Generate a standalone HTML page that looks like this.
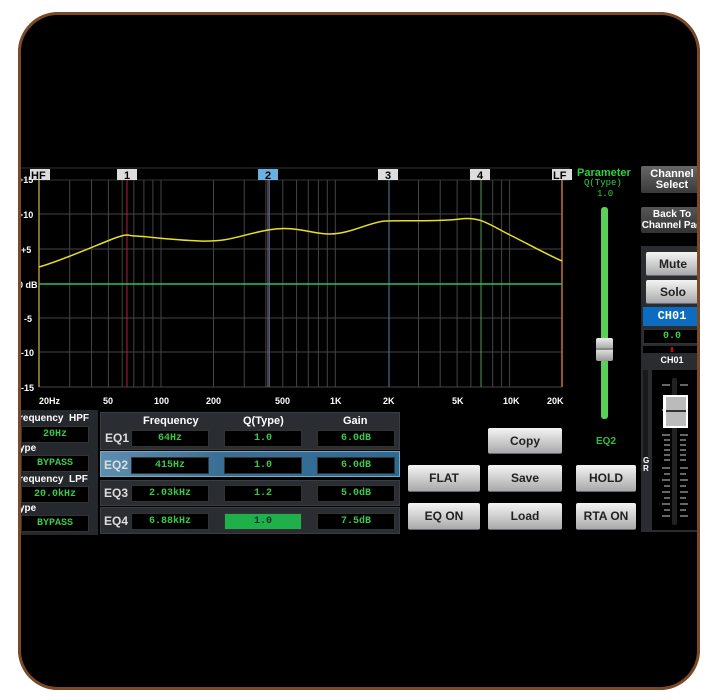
<!DOCTYPE html>
<html><head><meta charset="utf-8"><style>
*{margin:0;padding:0;box-sizing:border-box}
body{width:718px;height:700px;background:#fff;position:relative;overflow:hidden;font-family:"Liberation Sans",sans-serif}
#frame{position:absolute;left:18px;top:12px;width:682px;height:678px;background:#000;border-radius:40px}
#border{position:absolute;left:18px;top:12px;width:682px;height:678px;border:3px solid #7a4a28;border-radius:40px;z-index:10;box-shadow:0 0 0 40px #fff}
.a{position:absolute}
.btn{position:absolute;background:linear-gradient(#f4f4f4,#c8c8c8 60%,#a8a8a8);border-radius:2px;color:#222;font-weight:bold;font-size:12px;text-align:center;border-bottom:1px solid #667}
.box{position:absolute;background:#000;border:1px solid #333;color:#3ec64a;font-family:"Liberation Mono",monospace;font-size:10px;font-weight:bold;text-align:center;line-height:15px}
.lbl{position:absolute;color:#fff;font-size:10px;font-weight:bold}
.row{position:absolute;left:100px;width:300px;background:#2a2d31;border:1px solid #3a3d42}
.eq{position:absolute;color:#ddd;font-size:12px;font-weight:bold}
</style></head><body>
<div id="frame"></div>
<div id="border"></div>
<svg class="a" style="left:0;top:0" width="718" height="700">
<rect x="18" y="168" width="551" height="12" fill="#000" stroke="#333"/>
<g stroke="#444" stroke-width="1">
<line x1="69.7" y1="180" x2="69.7" y2="387"/><line x1="91.5" y1="180" x2="91.5" y2="387"/><line x1="108.4" y1="180" x2="108.4" y2="387"/><line x1="122.2" y1="180" x2="122.2" y2="387"/><line x1="133.8" y1="180" x2="133.8" y2="387"/><line x1="143.9" y1="180" x2="143.9" y2="387"/><line x1="152.9" y1="180" x2="152.9" y2="387"/><line x1="161" y1="180" x2="161" y2="387"/>
<line x1="213.5" y1="180" x2="213.5" y2="387"/><line x1="244.2" y1="180" x2="244.2" y2="387"/><line x1="265.9" y1="180" x2="265.9" y2="387"/><line x1="282.8" y1="180" x2="282.8" y2="387"/><line x1="296.6" y1="180" x2="296.6" y2="387"/><line x1="308.3" y1="180" x2="308.3" y2="387"/><line x1="318.4" y1="180" x2="318.4" y2="387"/><line x1="327.3" y1="180" x2="327.3" y2="387"/><line x1="335.3" y1="180" x2="335.3" y2="387"/>
<line x1="418.5" y1="180" x2="418.5" y2="387"/><line x1="440.2" y1="180" x2="440.2" y2="387"/><line x1="457.1" y1="180" x2="457.1" y2="387"/><line x1="470.9" y1="180" x2="470.9" y2="387"/><line x1="492.7" y1="180" x2="492.7" y2="387"/><line x1="501.6" y1="180" x2="501.6" y2="387"/><line x1="509.6" y1="180" x2="509.6" y2="387"/>
<line x1="39" y1="214" x2="562" y2="214"/><line x1="39" y1="249" x2="562" y2="249"/><line x1="39" y1="318" x2="562" y2="318"/><line x1="39" y1="352" x2="562" y2="352"/><line x1="39" y1="387" x2="562" y2="387"/><line x1="562" y1="180" x2="569" y2="180"/>
</g>
<line x1="39" y1="180" x2="39" y2="387" stroke="#a89040" stroke-width="1.5"/>
<line x1="562" y1="180" x2="562" y2="387" stroke="#c07828" stroke-width="1.5"/>
<line x1="127" y1="180" x2="127" y2="387" stroke="#b02040"/>
<line x1="268" y1="180" x2="268" y2="387" stroke="#a08040"/>
<line x1="269.5" y1="180" x2="269.5" y2="387" stroke="#4050c0"/>
<line x1="389" y1="180" x2="389" y2="387" stroke="#5080a0"/>
<line x1="481" y1="180" x2="481" y2="387" stroke="#50a050"/>
<line x1="39" y1="284" x2="562" y2="284" stroke="#2ec060" stroke-width="1.5"/>
<path d="M39,267 C60,261 90,248 110,240 S127,236 135,236 S170,240 200,241 S240,235 268,230 S310,234 330,234 S370,222 385,221 S440,222 460,219 S490,225 510,235 S548,255 562,261" fill="none" stroke="#e8e020" stroke-width="1.5"/>
<g font-family="Liberation Sans" font-size="9" font-weight="bold" fill="#fff">
<text x="18" y="183">+15</text><text x="18" y="218">+10</text><text x="21" y="253">+5</text><text x="18" y="288">0 dB</text><text x="24" y="322">-5</text><text x="21" y="356">-10</text><text x="21" y="391">-15</text>
<text x="39" y="404">20Hz</text><text x="103" y="404">50</text><text x="154" y="404">100</text><text x="206" y="404">200</text><text x="275" y="404">500</text><text x="330" y="404">1K</text><text x="383" y="404">2K</text><text x="452" y="404">5K</text><text x="503" y="404">10K</text><text x="547" y="404">20K</text>
</g>
<g font-family="Liberation Sans" font-size="11" font-weight="bold">
<rect x="30" y="169" width="20" height="11" fill="#ddd"/><text x="31" y="179" fill="#000">HF</text>
<rect x="117" y="169" width="20" height="11" fill="#ddd"/><text x="124" y="179" fill="#000">1</text>
<rect x="258" y="169" width="20" height="11" fill="#6ab0e0"/><text x="265" y="179" fill="#000">2</text>
<rect x="378" y="169" width="20" height="11" fill="#ddd"/><text x="385" y="179" fill="#000">3</text>
<rect x="470" y="169" width="20" height="11" fill="#ddd"/><text x="477" y="179" fill="#000">4</text>
<rect x="552" y="169" width="20" height="11" fill="#ddd"/><text x="553" y="179" fill="#000">LF</text>
</g>
</svg>

<div class="a" style="left:18px;top:410px;width:80px;height:125px;background:#25282c"></div>
<div class="lbl" style="left:19px;top:413px">requency&nbsp; HPF</div>
<div class="box" style="left:21px;top:426px;width:68px">20Hz</div>
<div class="lbl" style="left:19px;top:443px">ype</div>
<div class="box" style="left:21px;top:455px;width:68px">BYPASS</div>
<div class="lbl" style="left:19px;top:474px">requency&nbsp; LPF</div>
<div class="box" style="left:21px;top:486px;width:68px">20.0kHz</div>
<div class="lbl" style="left:19px;top:503px">ype</div>
<div class="box" style="left:21px;top:515px;width:68px">BYPASS</div>

<div class="row" style="top:412px;height:38px"></div>
<div class="row" style="top:451px;height:26px;background:linear-gradient(90deg,#5d8eb0,#3a6f95 40%,#2c6a96);border-color:#7ab"></div>
<div class="row" style="top:480px;height:26px"></div>
<div class="row" style="top:507px;height:27px"></div>
<div class="lbl" style="left:143px;top:415px;font-size:11px">Frequency</div>
<div class="lbl" style="left:243px;top:415px;font-size:11px">Q(Type)</div>
<div class="lbl" style="left:343px;top:415px;font-size:11px">Gain</div>
<div class="eq" style="left:105px;top:431px">EQ1</div>
<div class="eq" style="left:104px;top:458px">EQ2</div>
<div class="eq" style="left:104px;top:486px">EQ3</div>
<div class="eq" style="left:104px;top:514px">EQ4</div>
<div class="box" style="left:131px;top:430px;width:78px">64Hz</div>
<div class="box" style="left:224px;top:430px;width:78px">1.0</div>
<div class="box" style="left:317px;top:430px;width:78px">6.0dB</div>
<div class="box" style="left:131px;top:457px;width:78px">415Hz</div>
<div class="box" style="left:224px;top:457px;width:78px">1.0</div>
<div class="box" style="left:317px;top:457px;width:78px">6.0dB</div>
<div class="box" style="left:131px;top:485px;width:78px">2.03kHz</div>
<div class="box" style="left:224px;top:485px;width:78px">1.2</div>
<div class="box" style="left:317px;top:485px;width:78px">5.0dB</div>
<div class="box" style="left:131px;top:513px;width:78px">6.88kHz</div>
<div class="box" style="left:224px;top:513px;width:78px;background:#1fb04a;color:#033">1.0</div>
<div class="box" style="left:317px;top:513px;width:78px">7.5dB</div>

<div class="btn" style="left:488px;top:428px;width:74px;height:26px;line-height:26px">Copy</div>
<div class="btn" style="left:408px;top:465px;width:72px;height:27px;line-height:27px">FLAT</div>
<div class="btn" style="left:488px;top:465px;width:74px;height:27px;line-height:27px">Save</div>
<div class="btn" style="left:576px;top:465px;width:60px;height:27px;line-height:27px">HOLD</div>
<div class="btn" style="left:408px;top:503px;width:72px;height:27px;line-height:27px">EQ ON</div>
<div class="btn" style="left:488px;top:503px;width:74px;height:27px;line-height:27px">Load</div>
<div class="btn" style="left:576px;top:503px;width:60px;height:27px;line-height:27px">RTA ON</div>

<div class="a" style="left:577px;top:167px;color:#2ed040;font-size:11px;font-weight:bold">Parameter</div>
<div class="a" style="left:584px;top:178px;color:#2ed040;font-size:9px;font-family:'Liberation Mono',monospace">Q(Type)</div>
<div class="a" style="left:597px;top:189px;color:#2ed040;font-size:9px;font-family:'Liberation Mono',monospace">1.0</div>
<div class="a" style="left:601px;top:207px;width:7px;height:212px;background:#5ad05a;border-radius:3px"></div>
<div class="a" style="left:596px;top:338px;width:17px;height:23px;background:linear-gradient(#eee,#aaa 45%,#333 48%,#ddd 52%,#999);border-radius:2px"></div>
<div class="a" style="left:596px;top:436px;color:#2ec040;font-size:10px;font-weight:bold">EQ2</div>

<div class="btn" style="left:641px;top:166px;width:62px;height:27px;font-size:11px;line-height:11px;padding-top:3px;background:linear-gradient(#666,#3a3a3a);color:#fff;border:none">Channel<br>Select</div>
<div class="btn" style="left:641px;top:207px;width:62px;height:26px;font-size:10px;line-height:11px;padding-top:2px;background:linear-gradient(#555,#333);color:#fff;border:none;white-space:nowrap">Back To<br>Channel Pag</div>
<div class="a" style="left:641px;top:246px;width:60px;height:286px;background:#2a2c30"></div>
<div class="btn" style="left:646px;top:252px;width:54px;height:24px;line-height:24px">Mute</div>
<div class="btn" style="left:646px;top:280px;width:54px;height:24px;line-height:24px">Solo</div>
<div class="a" style="left:643px;top:307px;width:58px;height:19px;background:#0b6cc0;color:#fff;font-size:12px;font-weight:bold;text-align:center;line-height:19px;font-family:'Liberation Mono',monospace">CH01</div>
<div class="box" style="left:643px;top:329px;width:58px;height:15px;line-height:13px">0.0</div>
<div class="a" style="left:643px;top:346px;width:58px;height:7px;background:#000"></div>
<div class="a" style="left:671px;top:347px;width:2px;height:5px;background:#d00"></div>
<div class="a" style="left:643px;top:355px;width:58px;font-size:9px;font-weight:bold;color:#fff;text-align:center">CH01</div>
<div class="a" style="left:643px;top:370px;width:5px;height:90px;background:#1a1a1a"></div>
<div class="a" style="left:643px;top:457px;font-size:8px;font-weight:bold;color:#fff;line-height:8px">G<br>R</div>
<div class="a" style="left:652px;top:370px;width:46px;height:160px;background:#000"></div>
<div class="a" style="left:672px;top:378px;width:5px;height:147px;background:#222;border-radius:2px"></div>
<svg class="a" style="left:652px;top:370px" width="46" height="160">
<g stroke="#ccc" stroke-width="1">
<line x1="10" y1="15" x2="18" y2="15"/><line x1="28" y1="15" x2="36" y2="15"/>
<line x1="10" y1="40" x2="18" y2="40"/><line x1="28" y1="40" x2="36" y2="40"/>
<line x1="10" y1="65" x2="18" y2="65"/><line x1="28" y1="65" x2="36" y2="65"/>
<line x1="12" y1="70" x2="18" y2="70"/><line x1="12" y1="75" x2="18" y2="75"/><line x1="12" y1="80" x2="18" y2="80"/><line x1="12" y1="85" x2="18" y2="85"/><line x1="12" y1="90" x2="18" y2="90"/><line x1="10" y1="98" x2="18" y2="98"/><line x1="12" y1="104" x2="18" y2="104"/><line x1="10" y1="110" x2="18" y2="110"/><line x1="12" y1="116" x2="18" y2="116"/><line x1="10" y1="122" x2="18" y2="122"/><line x1="12" y1="128" x2="18" y2="128"/><line x1="10" y1="134" x2="18" y2="134"/><line x1="12" y1="140" x2="18" y2="140"/><line x1="10" y1="146" x2="18" y2="146"/>
<line x1="28" y1="70" x2="34" y2="70"/><line x1="28" y1="75" x2="34" y2="75"/><line x1="28" y1="80" x2="34" y2="80"/><line x1="28" y1="85" x2="34" y2="85"/><line x1="28" y1="90" x2="34" y2="90"/><line x1="28" y1="98" x2="36" y2="98"/><line x1="28" y1="104" x2="34" y2="104"/><line x1="28" y1="110" x2="36" y2="110"/><line x1="28" y1="116" x2="34" y2="116"/><line x1="28" y1="122" x2="36" y2="122"/><line x1="28" y1="128" x2="34" y2="128"/><line x1="28" y1="134" x2="36" y2="134"/><line x1="28" y1="140" x2="34" y2="140"/><line x1="28" y1="146" x2="36" y2="146"/>
</g>
<rect x="11" y="25" width="25" height="33" fill="#fff"/>
<rect x="14" y="27" width="20" height="29" fill="#bbb"/>
<rect x="14" y="40" width="20" height="2" fill="#333"/>
</svg>
</body></html>
